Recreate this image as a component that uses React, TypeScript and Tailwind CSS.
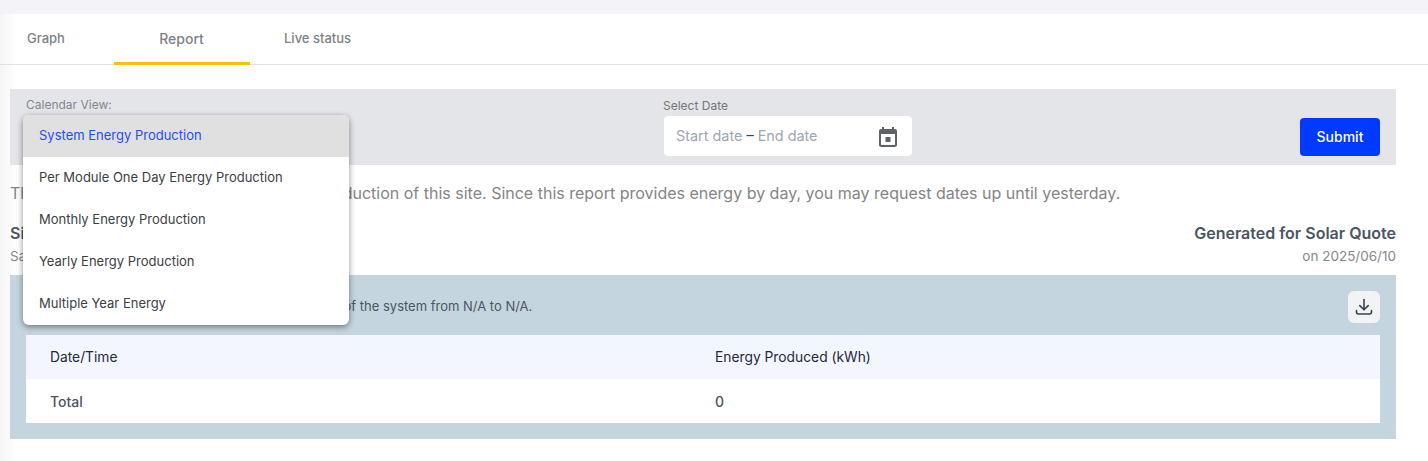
const OPTIONS = [
  'System Energy Production',
  'Per Module One Day Energy Production',
  'Monthly Energy Production',
  'Yearly Energy Production',
  'Multiple Year Energy',
];

function CalendarIcon() {
  return (
    <svg className="mt-1" width="24" height="24" viewBox="0 0 24 24" fill="#5f6368">
      <path
        fillRule="evenodd"
        d="M19 3h-1V1h-2v2H8V1H6v2H5c-1.11 0-1.99.9-1.99 2L3 19c0 1.1.89 2 2 2h14c1.1 0 2-.9 2-2V5c0-1.1-.9-2-2-2zm0 16H5V8h14v11z"
      />
      <path d="M9.5 11h5v5h-5z" />
    </svg>
  );
}

function DownloadIcon() {
  return (
    <svg width="18" height="18" viewBox="0 0 18 18" fill="none" stroke="#374151" strokeWidth="1.6" strokeLinecap="round" strokeLinejoin="round">
      <path d="M9 1.5v10" />
      <path d="M4.8 7.6 9 11.8l4.2-4.2" />
      <path d="M1.5 12.5v1.5a2 2 0 0 0 2 2h11a2 2 0 0 0 2-2v-1.5" />
    </svg>
  );
}

export default function App() {
  return (
    <div className="relative h-[461px] w-[1428px] overflow-hidden bg-[linear-gradient(90deg,#f5f5f5,#ffffff_16px)] font-['Inter',sans-serif]">
      <div className="h-[14px] bg-[#f3f3f8]" />

      {/* Tabs */}
      <div className="flex h-[51px] border-b border-[#e2e2e2] text-[13px] font-medium leading-[20px] text-[#7e8286]">
        <div className="w-[114px] pl-[27px] pt-[14px]">Graph</div>
        <div className="w-[136px] border-b-[3px] border-[#fcc00c] -mb-px pt-[15px] pr-px text-center text-[14px]">Report</div>
        <div className="pl-[34px] pt-[14px]">Live status</div>
      </div>

      {/* Filters */}
      <div className="ml-[10px] mr-[32px] mt-[24px] flex h-[76px] bg-[#e4e5e9]">
        <div className="w-[653px] pl-[16px] pt-[8px] text-xs text-[#85878b]">Calendar View:</div>
        <div className="w-[260px] pt-[9px]">
          <div className="text-xs leading-[15px] text-[#74767a]">Select Date</div>
          <div className="mt-[3px] ml-px flex h-[40px] w-[248px] items-center justify-between rounded bg-white pl-[12px] pr-[12px] text-[14.4px] text-[#a0a5b1]">
            <span>
              Start date <span className="text-[#374151]">–</span> End date
            </span>
            <CalendarIcon />
          </div>
        </div>
        <div className="ml-auto pr-[16px] pt-[29px]">
          <button className="h-[38px] w-[80px] rounded bg-[#0039ff] text-sm font-medium text-white">Submit</button>
        </div>
      </div>

      <p className="mx-[10px] mt-[16px] text-[16px] leading-[24px] text-[#858585]">
        This report shows the daily solar energy production of this site. Since this report provides energy by day, you may request dates up until yesterday.
      </p>

      {/* Site heading */}
      <div className="ml-[10px] mr-[32px] mt-[18px] flex h-[52px] justify-between">
        <div>
          <div className="text-[16px] font-semibold leading-[20px] text-[#4b5563]">Site</div>
          <div className="mt-[5px] text-[13.5px] leading-[16px] text-[#85878b]">Sample</div>
        </div>
        <div className="text-right">
          <div className="text-[16px] font-semibold leading-[20px] text-[#4b5563]">Generated for Solar Quote</div>
          <div className="mt-[5px] text-[13.5px] leading-[16px] text-[#85878b]">on 2025/06/10</div>
        </div>
      </div>

      {/* Report panel */}
      <div className="ml-[10px] mr-[32px] h-[164px] bg-[#c5d5df] px-[16px] pt-[16px]">
        <div className="flex h-[32px] items-center justify-between">
          <span className="text-[13px] text-[#4b5563]">This table below shows the total energy production of the system from N/A to N/A.</span>
          <button className="flex h-[32px] w-[32px] items-center justify-center rounded-md bg-[#f1f3f5]">
            <DownloadIcon />
          </button>
        </div>
        <div className="mt-[12px]">
          <div className="flex h-[44px] items-center bg-[#f3f6fe] text-[13.8px] text-[#1f2937]">
            <div className="w-[689px] pl-[24px]">Date/Time</div>
            <div>Energy Produced (kWh)</div>
          </div>
          <div className="flex h-[44px] items-center bg-white text-[14px] font-medium text-[#4b5563]">
            <div className="w-[689px] pl-[24px]">Total</div>
            <div>0</div>
          </div>
        </div>
      </div>

      {/* Open select menu */}
      <div className="absolute left-[23px] top-[115px] w-[326px] overflow-hidden rounded-md bg-white text-[13px] text-[#3c4043] shadow-[0_2px_6px_rgba(0,0,0,0.45)]">
        {OPTIONS.map((option, i) => (
          <div
            key={option}
            className={i === 0 ? 'flex h-[42px] items-center bg-[#e0e0e0] pl-[16px] text-[#1f4fef]' : 'flex h-[42px] items-center pl-[16px]'}
          >
            {option}
          </div>
        ))}
      </div>
    </div>
  );
}
